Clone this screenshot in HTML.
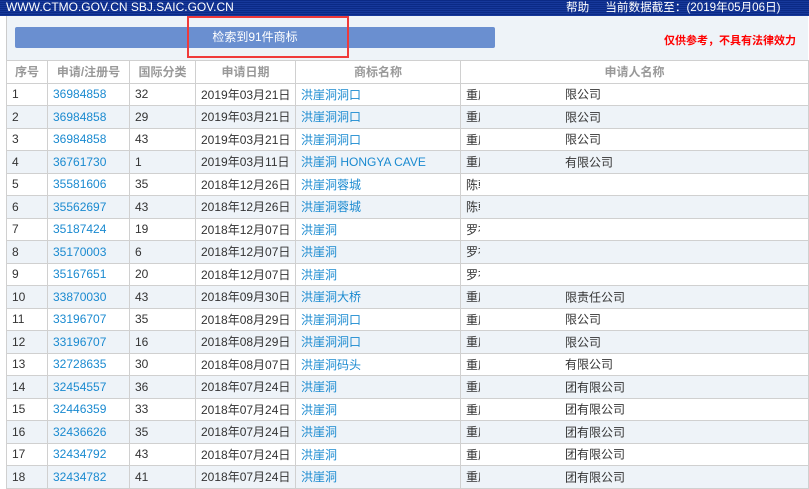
<!DOCTYPE html>
<html><head><meta charset="utf-8">
<style>
*{margin:0;padding:0;box-sizing:border-box}
body{width:809px;height:487px;overflow:hidden;background:#fff;font-family:"Liberation Sans","Noto Sans CJK SC",sans-serif;font-size:12px;color:#333;position:relative}
#top{position:absolute;left:0;top:0;width:809px;height:16px;background:repeating-linear-gradient(180deg,#0b2a86 0 1px,#16389a 1px 2px);color:#fff;font-size:12px;line-height:15px}
#top .l{position:absolute;left:6px;top:0}
#top .r{position:absolute;left:566px;top:0;font-size:11.6px}
#bar{position:absolute;left:6px;top:16px;width:802px;height:44px;background:#eef3f8;border-left:1px solid #ccc}
#btn{position:absolute;left:15px;top:27px;width:480px;height:21px;background:#6a8fd0;border-radius:2px;color:#fff;text-align:center;line-height:21px;font-size:12px}
#box{position:absolute;left:187px;top:16px;width:162px;height:42px;border:2px solid #f03a3a}
#warn{position:absolute;left:664px;top:32px;color:#f00;font-weight:bold;font-size:11px}
table{position:absolute;left:6px;top:60px;border-collapse:collapse;table-layout:fixed;width:803px}
td,th{border:1px solid #d0d0d0;height:22.5px;padding:0 0 0 5px;white-space:nowrap;overflow:hidden;text-align:left;font-weight:normal}
th{color:#999;text-align:center;padding:0;font-weight:bold}
tr:nth-child(odd) td{background:#eef3f8}
a{color:#1a8ad0;text-decoration:none}
.ap{position:relative}
.ap .c{display:inline-block;width:14px;overflow:hidden;vertical-align:middle}
.ap .s{position:absolute;left:104px;top:50%;transform:translateY(-50%)}
</style></head><body>
<div id="top"><span class="l">WWW.CTMO.GOV.CN SBJ.SAIC.GOV.CN</span><span class="r">帮助&nbsp;&nbsp;&nbsp;&nbsp;&nbsp;当前数据截至：(2019年05月06日)</span></div>
<div id="bar"></div>
<div id="btn">检索到91件商标</div>
<div id="box"></div>
<div id="warn">仅供参考，不具有法律效力</div>
<table>
<colgroup><col style="width:41px"><col style="width:82px"><col style="width:66px"><col style="width:100px"><col style="width:165px"><col></colgroup>
<tr><th>序号</th><th>申请/注册号</th><th>国际分类</th><th>申请日期</th><th>商标名称</th><th>申请人名称</th></tr>
<tr><td>1</td><td><a>36984858</a></td><td>32</td><td>2019年03月21日</td><td><a>洪崖洞洞口</a></td><td class="ap"><span class="c">重庆</span><span class="s">限公司</span></td></tr>
<tr><td>2</td><td><a>36984858</a></td><td>29</td><td>2019年03月21日</td><td><a>洪崖洞洞口</a></td><td class="ap"><span class="c">重庆</span><span class="s">限公司</span></td></tr>
<tr><td>3</td><td><a>36984858</a></td><td>43</td><td>2019年03月21日</td><td><a>洪崖洞洞口</a></td><td class="ap"><span class="c">重庆</span><span class="s">限公司</span></td></tr>
<tr><td>4</td><td><a>36761730</a></td><td>1</td><td>2019年03月11日</td><td><a>洪崖洞 HONGYA CAVE</a></td><td class="ap"><span class="c">重庆</span><span class="s">有限公司</span></td></tr>
<tr><td>5</td><td><a>35581606</a></td><td>35</td><td>2018年12月26日</td><td><a>洪崖洞蓉城</a></td><td class="ap"><span class="c">陈韩</span></td></tr>
<tr><td>6</td><td><a>35562697</a></td><td>43</td><td>2018年12月26日</td><td><a>洪崖洞蓉城</a></td><td class="ap"><span class="c">陈韩</span></td></tr>
<tr><td>7</td><td><a>35187424</a></td><td>19</td><td>2018年12月07日</td><td><a>洪崖洞</a></td><td class="ap"><span class="c">罗袖</span></td></tr>
<tr><td>8</td><td><a>35170003</a></td><td>6</td><td>2018年12月07日</td><td><a>洪崖洞</a></td><td class="ap"><span class="c">罗袖</span></td></tr>
<tr><td>9</td><td><a>35167651</a></td><td>20</td><td>2018年12月07日</td><td><a>洪崖洞</a></td><td class="ap"><span class="c">罗袖</span></td></tr>
<tr><td>10</td><td><a>33870030</a></td><td>43</td><td>2018年09月30日</td><td><a>洪崖洞大桥</a></td><td class="ap"><span class="c">重庆</span><span class="s">限责任公司</span></td></tr>
<tr><td>11</td><td><a>33196707</a></td><td>35</td><td>2018年08月29日</td><td><a>洪崖洞洞口</a></td><td class="ap"><span class="c">重庆</span><span class="s">限公司</span></td></tr>
<tr><td>12</td><td><a>33196707</a></td><td>16</td><td>2018年08月29日</td><td><a>洪崖洞洞口</a></td><td class="ap"><span class="c">重庆</span><span class="s">限公司</span></td></tr>
<tr><td>13</td><td><a>32728635</a></td><td>30</td><td>2018年08月07日</td><td><a>洪崖洞码头</a></td><td class="ap"><span class="c">重庆</span><span class="s">有限公司</span></td></tr>
<tr><td>14</td><td><a>32454557</a></td><td>36</td><td>2018年07月24日</td><td><a>洪崖洞</a></td><td class="ap"><span class="c">重庆</span><span class="s">团有限公司</span></td></tr>
<tr><td>15</td><td><a>32446359</a></td><td>33</td><td>2018年07月24日</td><td><a>洪崖洞</a></td><td class="ap"><span class="c">重庆</span><span class="s">团有限公司</span></td></tr>
<tr><td>16</td><td><a>32436626</a></td><td>35</td><td>2018年07月24日</td><td><a>洪崖洞</a></td><td class="ap"><span class="c">重庆</span><span class="s">团有限公司</span></td></tr>
<tr><td>17</td><td><a>32434792</a></td><td>43</td><td>2018年07月24日</td><td><a>洪崖洞</a></td><td class="ap"><span class="c">重庆</span><span class="s">团有限公司</span></td></tr>
<tr><td>18</td><td><a>32434782</a></td><td>41</td><td>2018年07月24日</td><td><a>洪崖洞</a></td><td class="ap"><span class="c">重庆</span><span class="s">团有限公司</span></td></tr>
</table>
</body></html>
